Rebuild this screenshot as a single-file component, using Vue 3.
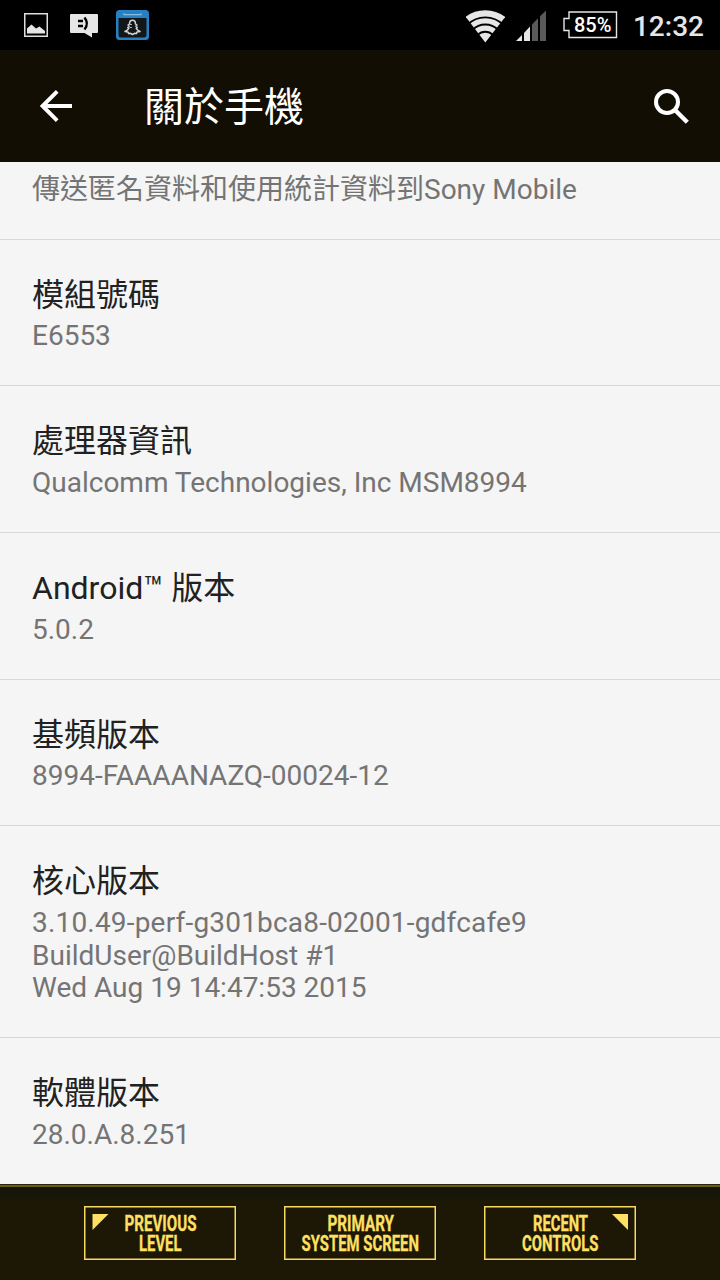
<template>
  <div class="phone">
    <header class="status-bar">
      <div class="notifications">
        <svg class="icon-picture" width="24" height="24" viewBox="0 0 24 24">
          <rect x="0.75" y="0.75" width="22.5" height="22.5" fill="none" stroke="#deded8" stroke-width="1.5" />
          <path d="M3 20.5V15.5L7.5 11.5L12 15.5L15.5 13.5L21 18V20.5Z" fill="#e6e6e6" />
        </svg>
        <svg class="icon-message" width="28" height="24" viewBox="0 0 28 24">
          <path d="M1 0H27Q28 0 28 1V18Q28 19 27 19H22V23.5L14.5 19H1Q0 19 0 18V1Q0 0 1 0Z" fill="#e6e6e6" />
          <path d="M8 7H13M8 12H13" stroke="#000" stroke-width="2.6" />
          <path d="M14.500 3.500Q19.200 9.500 14.500 15.500" fill="none" stroke="#000" stroke-width="2.400" />
        </svg>
        <svg class="icon-app" width="33" height="30" viewBox="0 0 33 30">
          <rect width="33" height="30" rx="3.5" fill="#2780c2" />
          <path d="M2.500 8H30.500V25Q30.500 27.500 28 27.500H5Q2.500 27.500 2.500 25Z" fill="#14171a" />
          <path d="M8 3.300V4.700H25V3.300" fill="none" stroke="#86bce2" stroke-width="1.200" />
          <path
            d="M16.500 10.300C18.800 10.300 19.500 12 19.500 14L21 15L19.800 16L21.200 17.500L20.200 18.500L22 20.300L24 21.500L21 22L20.500 23.500L18.500 23.300L16.500 24.500L14.500 23.300L12.500 23.500L12 22L9 21.500L11 20.300L12.800 18.500L11.800 17.500L13.200 16L12 15L13.500 14C13.500 12 14.200 10.300 16.500 10.300Z"
            fill="#14171a" stroke="#d5d5d5" stroke-width="1.500" stroke-linejoin="round"
          />
          <path d="M13.500 14.500H16M13.500 17.500H16" stroke="#aaa" stroke-width="1" />
        </svg>
      </div>
      <div class="system">
        <svg class="icon-wifi" width="39" height="33" viewBox="0 0 39 33">
          <defs>
            <clipPath id="fan"><path d="M19.300 32.500L-4 2V-3H43V2Z" /></clipPath>
          </defs>
          <g clip-path="url(#fan)" fill="none" stroke="#e6e6e6">
            <circle cx="19.300" cy="32.500" r="29.200" stroke-width="6.200" />
            <circle cx="19.300" cy="32.500" r="21.700" stroke-width="5.200" />
            <circle cx="19.300" cy="32.500" r="14.300" stroke-width="5.200" />
            <circle cx="19.300" cy="32.500" r="4.900" stroke-width="9.800" />
          </g>
        </svg>
        <svg class="icon-signal" width="31" height="31" viewBox="0 0 31 31">
          <path d="M0 30L6 24V30Z" fill="#e6e6e6" />
          <path d="M8 22L14 15.500V30H8Z" fill="#e6e6e6" />
          <path d="M16 13.500L22 7.200V30H16Z" fill="#5a5a5a" />
          <path d="M24 5.300L30 -0.500V30H24Z" fill="#5a5a5a" />
        </svg>
        <div class="battery">
          <svg width="55" height="28" viewBox="0 0 55 28">
            <path d="M6 1H53.500V26.500H6V19.500H1V7.500H6Z" fill="none" stroke="#e6e6e6" stroke-width="1.400" />
          </svg>
          <span>85%</span>
        </div>
        <span class="clock">12:32</span>
      </div>
    </header>

    <div class="action-bar">
      <svg class="icon-back" width="32" height="32" viewBox="0 0 32 32">
        <path d="M32 16H2.500M17.200 1.400L2.600 16L17.200 30.600" fill="none" stroke="#fff" stroke-width="3.900" />
      </svg>
      <h1>關於手機</h1>
      <svg class="icon-search" width="37" height="37" viewBox="0 0 37 37">
        <circle cx="14" cy="14" r="11" fill="none" stroke="#fff" stroke-width="4" />
        <path d="M22.500 22.500L34.300 34.300" stroke="#fff" stroke-width="4.400" />
      </svg>
    </div>

    <ul class="settings">
      <li class="partial">
        <p class="summary">傳送匿名資料和使用統計資料到Sony Mobile</p>
      </li>
      <li v-for="item in items" :key="item.title">
        <h2>{{ item.title }}</h2>
        <p v-for="(line, i) in item.lines" :key="line" :class="['summary', { build: item.build && i === 0 }]">{{ line }}</p>
      </li>
    </ul>

    <nav class="nav-bar">
      <button v-for="button in buttons" :key="button.id" :class="['nav-button', button.id]">
        <svg width="152" height="54" viewBox="0 0 152 54">
          <rect x="0.750" y="0.750" width="150.500" height="52.500" fill="none" stroke="#f5d962" stroke-width="1.500" />
          <path v-if="button.corner" :d="button.corner" fill="#ffe063" />
          <text
            v-for="(line, i) in button.lines"
            :key="line.text"
            :x="line.x"
            :y="25 + i * 20"
            :textLength="line.width"
            lengthAdjust="spacingAndGlyphs"
          >{{ line.text }}</text>
        </svg>
      </button>
    </nav>
  </div>
</template>

<script setup>
const items = [
  { title: '模組號碼', lines: ['E6553'] },
  { title: '處理器資訊', lines: ['Qualcomm Technologies, Inc MSM8994'] },
  { title: 'Android™ 版本', lines: ['5.0.2'] },
  { title: '基頻版本', lines: ['8994-FAAAANAZQ-00024-12'] },
  {
    title: '核心版本',
    build: true,
    lines: ['3.10.49-perf-g301bca8-02001-gdfcafe9', 'BuildUser@BuildHost #1', 'Wed Aug 19 14:47:53 2015']
  },
  { title: '軟體版本', lines: ['28.0.A.8.251'] }
]

const buttons = [
  {
    id: 'previous',
    corner: 'M8.500 8H24.500L8.500 24Z',
    lines: [
      { text: 'PREVIOUS', x: 40.5, width: 72 },
      { text: 'LEVEL', x: 55, width: 42.5 }
    ]
  },
  {
    id: 'primary',
    lines: [
      { text: 'PRIMARY', x: 43.5, width: 66.5 },
      { text: 'SYSTEM SCREEN', x: 17.5, width: 117.5 }
    ]
  },
  {
    id: 'recent',
    corner: 'M128 8H144V24Z',
    lines: [
      { text: 'RECENT', x: 49, width: 55 },
      { text: 'CONTROLS', x: 38, width: 76.5 }
    ]
  }
]
</script>

<style>
body {
  margin: 0;
  background: #000;
}
</style>

<style scoped>
.phone {
  width: 720px;
  height: 1280px;
  display: flex;
  flex-direction: column;
  overflow: hidden;
  background: #f5f5f5;
  font-family: Roboto, "Noto Sans CJK TC", sans-serif;
}

svg {
  display: block;
  flex: none;
}

.status-bar {
  flex: none;
  height: 50px;
  box-sizing: border-box;
  padding: 0 16px 0 24px;
  display: flex;
  justify-content: space-between;
  background: #000;
}

.notifications,
.system {
  display: flex;
  align-items: flex-start;
}

.icon-picture {
  margin-top: 13px;
}

.icon-message {
  margin: 14px 18px 0 22px;
}

.icon-app {
  margin-top: 10px;
}

.icon-wifi {
  margin: 10px 11px 0 0;
}

.icon-signal {
  margin: 11px 16px 0 0;
  overflow: visible;
}

.battery {
  display: grid;
  margin: 11px 15px 0 0;
}

.battery svg,
.battery span {
  grid-area: 1 / 1;
}

.battery span {
  padding-left: 11px;
  color: #fff;
  font-size: 20px;
  font-weight: 500;
  line-height: 28px;
}

.clock {
  color: #e6e6e6;
  font-size: 28px;
  font-weight: 500;
  line-height: 53px;
}

.action-bar {
  flex: none;
  height: 112px;
  box-sizing: border-box;
  padding: 0 30px 0 40px;
  display: flex;
  align-items: center;
  background: #120e03;
}

.action-bar h1 {
  flex: 1;
  margin: 4px 0 0 72px;
  color: #fff;
  font-size: 40px;
  font-weight: 400;
  line-height: 56px;
}

.settings {
  flex: none;
  height: 1022px;
  margin: 0;
  padding: 0;
  list-style: none;
  overflow: hidden;
}

.settings li {
  box-sizing: border-box;
  padding: 32px 32px 32.300px;
  border-bottom: 1px solid #d8d8d8;
}

.settings .partial {
  height: 77.670px;
  padding-top: 12px;
}

.settings h2 {
  margin: 0 0 1.670px;
  color: #212121;
  font-size: 32px;
  font-weight: 400;
  line-height: 47px;
}

.summary {
  margin: 0;
  color: #747474;
  font-size: 28px;
  line-height: 32.700px;
  white-space: nowrap;
}

.build {
  letter-spacing: 0.190px;
}

.nav-bar {
  flex: none;
  height: 96px;
  box-sizing: border-box;
  border-top: 1px solid #2b250d;
  padding: 21px 84px 0;
  display: flex;
  justify-content: space-between;
  align-items: flex-start;
  background: linear-gradient(#6a5c12 0 2px, #13130a 2px, #15150a 5px, #1d1806 18px);
}

.nav-button {
  padding: 0;
  border: 0;
  background: none;
}

.nav-button svg {
  overflow: visible;
}

.nav-button text {
  fill: #ffe063;
  stroke: #ffe063;
  stroke-width: 0.300px;
  font-family: Roboto, sans-serif;
  font-size: 22.500px;
  font-weight: 700;
}
</style>
